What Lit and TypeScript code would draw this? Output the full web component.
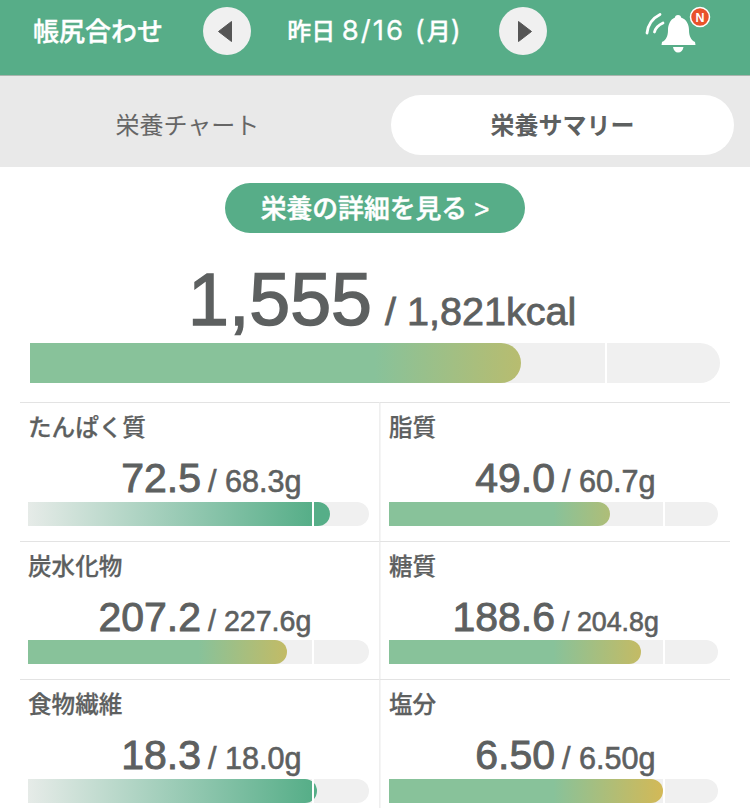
import {LitElement, html, css} from 'lit'
import {customElement} from 'lit/decorators.js'
import {classMap} from 'lit/directives/class-map.js'

type Nutrient = {
  label: string
  value: string
  target: string
  fill: number
  kind: 'warm' | 'over'
  size?: 'sm' | 'xs'
}

const nutrients: Nutrient[] = [
  {label: 'たんぱく質', value: '72.5', target: '68.3g', fill: 88.6, kind: 'over'},
  {label: '脂質', value: '49.0', target: '60.7g', fill: 67.2, kind: 'warm'},
  {label: '炭水化物', value: '207.2', target: '227.6g', fill: 76, kind: 'warm', size: 'sm'},
  {label: '糖質', value: '188.6', target: '204.8g', fill: 76.6, kind: 'warm', size: 'xs'},
  {label: '食物繊維', value: '18.3', target: '18.0g', fill: 84.7, kind: 'over'},
  {label: '塩分', value: '6.50', target: '6.50g', fill: 83.3, kind: 'warm'},
]

@customElement('app-root')
export class AppRoot extends LitElement {
  static styles = css`
    :host {
      display: block;
      height: 808px;
      overflow: hidden;
      background: #fff;
      color: #5d6060;
      font-family: "Liberation Sans", "Noto Sans CJK JP", sans-serif;
    }
    .header {
      display: flex;
      align-items: center;
      height: 62px;
      padding: 0 0 13px 33px;
      background: #57ad88;
      border-bottom: 1px solid #a9b5ae;
      color: #fff;
      font-size: 25.6px;
      font-weight: 500;
    }
    .title {
      width: 170px;
      padding-bottom: 3px;
      font-size: 26px;
      -webkit-text-stroke: .4px #fff;
    }
    .round {
      display: flex;
      align-items: center;
      justify-content: center;
      width: 48px;
      height: 48px;
      border-radius: 50%;
      background: #f0f0f0;
    }
    .prev svg {
      margin-right: 4px;
    }
    .next svg {
      margin-left: 4px;
    }
    .date {
      width: 248px;
      padding-bottom: 3px;
      font-size: 24px;
      text-align: center;
      white-space: nowrap;
      -webkit-text-stroke: .3px #fff;
    }
    .date .digits {
      font-family: Inter, sans-serif;
      font-size: 27.5px;
      font-weight: 400;
      letter-spacing: 2px;
    }
    .bell {
      display: block;
      margin-left: 93px;
    }
    .tabs {
      display: grid;
      grid-template-columns: 343px 343px;
      gap: 32px;
      height: 60px;
      padding: 19px 16px 12px;
      background: #e9e9e9;
      font-size: 24px;
    }
    .tab {
      display: flex;
      align-items: center;
      justify-content: center;
      padding-bottom: 4px;
      color: #666;
    }
    .tab.active {
      border-radius: 30px;
      background: #fff;
      color: #5d6060;
      font-weight: 700;
    }
    .detail {
      display: block;
      width: 300px;
      height: 50px;
      margin: 16px auto 0;
      border-radius: 25px;
      background: #57ad88;
      color: #fff;
      font-size: 25.8px;
      font-weight: 500;
      line-height: 52px;
      text-align: center;
      -webkit-text-stroke: .5px #fff;
    }
    .total {
      padding: 27px 30px 19px;
    }
    .total .amount {
      display: grid;
      grid-template-columns: 342px 1fr;
      gap: 13px;
      align-items: baseline;
      height: 80px;
      margin-bottom: 3px;
    }
    .total .value {
      font-size: 73.5px;
      line-height: 80px;
      text-align: right;
      -webkit-text-stroke: 1.5px #5d6060;
    }
    .total .target {
      font-size: 39.6px;
      -webkit-text-stroke: .8px #5d6060;
    }
    .track {
      position: relative;
      height: 24px;
      border-radius: 0 12px 12px 0;
      background: #f0f0f0;
    }
    .total .track {
      height: 40px;
      border-radius: 0 20px 20px 0;
    }
    .fill {
      height: 100%;
      border-radius: 0 12px 12px 0;
      background-repeat: no-repeat;
    }
    .total .fill {
      border-radius: 0 20px 20px 0;
    }
    .fill.warm {
      background-image: linear-gradient(90deg, #88c29a 50%, #d3b957 83.3%);
    }
    .fill.over {
      background-image: linear-gradient(90deg, #e6ebe8 0, #56ae88 83.3%, #56ae88 100%);
    }
    .tick {
      position: absolute;
      top: 0;
      bottom: 0;
      left: 83.4%;
      width: 2px;
      background: #fff;
    }
    .grid {
      display: grid;
      grid-template-columns: 359px 351px;
      grid-auto-rows: 138.6px;
      margin: 0 20px;
    }
    .cell {
      padding: 10px 10px 0 8px;
      border-top: 1px solid #e3e3e3;
    }
    .cell:nth-child(even) {
      padding: 10px 12px 0 9px;
      border-left: 1px solid #efefef;
      box-shadow: inset 1px 0 0 #f5f5f5;
    }
    .label {
      font-size: 23.6px;
      font-weight: 500;
      line-height: 30px;
      -webkit-text-stroke: .25px #5d6060;
    }
    .amount {
      display: grid;
      grid-template-columns: 173px 1fr;
      gap: 7px;
      align-items: baseline;
    }
    .cell .amount {
      height: 46px;
      margin: 12px 0 .8px;
    }
    .cell:nth-child(even) .amount {
      grid-template-columns: 166px 1fr;
    }
    .cell .value {
      font-size: 41px;
      line-height: 46px;
      text-align: right;
      -webkit-text-stroke: .9px #5d6060;
    }
    .cell .target {
      font-size: 30.6px;
      white-space: nowrap;
      -webkit-text-stroke: .6px #5d6060;
    }
    .cell .target.sm {
      font-size: 28.6px;
    }
    .cell .target.xs {
      font-size: 26.8px;
    }
  `

  // the gradient is sized to the whole track, so the colour depends on how far the fill reaches
  private bar(fill: number, kind: string) {
    return html`
      <div class="track">
        <div
          class="fill ${kind}"
          style="width: ${fill}%; background-size: ${(100 / fill) * 100}% 100%"
        ></div>
        <span class="tick"></span>
      </div>
    `
  }

  private cell(n: Nutrient) {
    const targetClass = {target: true, sm: n.size === 'sm', xs: n.size === 'xs'}
    return html`
      <div class="cell">
        <div class="label">${n.label}</div>
        <div class="amount">
          <span class="value">${n.value}</span>
          <span class=${classMap(targetClass)}>/ ${n.target}</span>
        </div>
        ${this.bar(n.fill, n.kind)}
      </div>
    `
  }

  render() {
    return html`
      <header class="header">
        <div class="title">帳尻合わせ</div>
        <div class="round prev">
          <svg width="14" height="21" viewBox="0 0 14 21">
            <path d="M13.5 .5 V20.5 L.5 10.5 Z" fill="#555" stroke="#555" stroke-linejoin="round"/>
          </svg>
        </div>
        <div class="date">昨日 <span class="digits">8/16 (</span>月<span class="digits">)</span></div>
        <div class="round next">
          <svg width="14" height="21" viewBox="0 0 14 21">
            <path d="M.5 .5 V20.5 L13.5 10.5 Z" fill="#555" stroke="#555" stroke-linejoin="round"/>
          </svg>
        </div>
        <svg class="bell" width="75" height="56" viewBox="640 3 75 56">
          <g fill="none" stroke="#fff" stroke-width="2.8" stroke-linecap="round">
            <path d="M647 33 C648 25 653 18 660 14.5"/>
            <path d="M654.5 32 C655.5 28 658.5 25 663 23"/>
          </g>
          <path
            d="M678 15 C680 15 681 16 681 17.5 C687 19.5 689 25 689 30 C689 36 691 40 695 42 L695.5 45 H661.5 L662 42 C666 40 668 36 668 30 C668 25 670 19.5 675 17.5 C675 16 676 15 678 15 Z"
            fill="#fff"
          />
          <path d="M673 47 H683.5 C683 50.5 681 52.5 678 52.5 C675.5 52.5 673.5 50.5 673 47 Z" fill="#fff"/>
          <circle cx="700" cy="17" r="9.5" fill="#e9522a" stroke="#fff" stroke-width="1.5"/>
          <text
            x="700"
            y="21.5"
            fill="#fff"
            font-size="12.5"
            font-weight="700"
            text-anchor="middle"
          >N</text>
        </svg>
      </header>
      <nav class="tabs">
        <div class="tab">栄養チャート</div>
        <div class="tab active">栄養サマリー</div>
      </nav>
      <a class="detail">栄養の詳細を見る &gt;</a>
      <section class="total">
        <div class="amount">
          <span class="value">1,555</span>
          <span class="target">/ 1,821kcal</span>
        </div>
        ${this.bar(71.2, 'warm')}
      </section>
      <section class="grid">
        ${nutrients.map((n) => this.cell(n))}
      </section>
    `
  }
}

declare global {
  interface HTMLElementTagNameMap {
    'app-root': AppRoot
  }
}
